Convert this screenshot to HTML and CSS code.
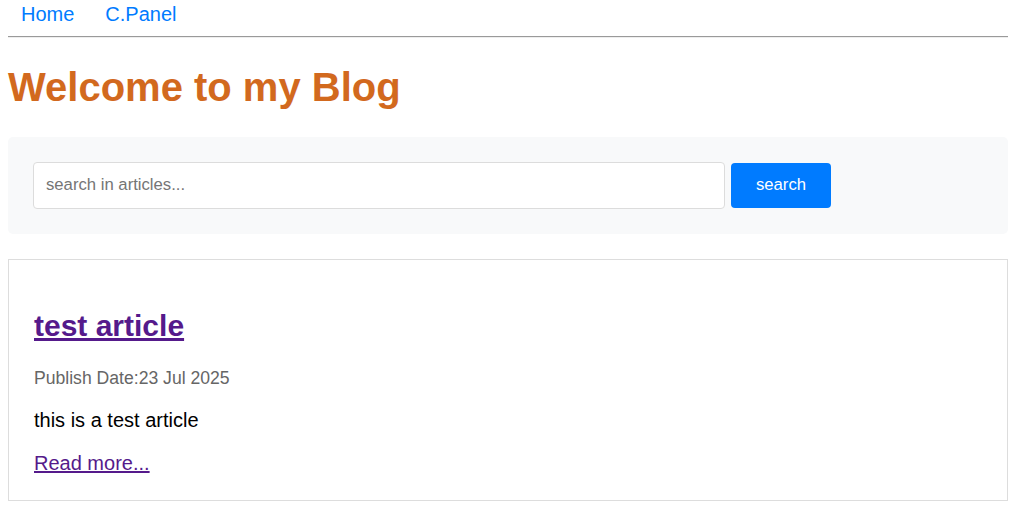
FILE: index.html
```html
<!DOCTYPE html>
<html lang="en">
<head>
<meta charset="utf-8">
<title>My Blog</title>
<link rel="stylesheet" href="styles.css">
</head>
<body>
<div class="page">
  <nav class="nav">
    <a class="nav-link" href="#">Home</a>
    <a class="nav-link" href="#">C.Panel</a>
  </nav>
  <hr class="divider">
  <h1 class="title">Welcome to my Blog</h1>
  <form class="search">
    <input class="search-input" type="text" placeholder="search in articles...">
    <button class="search-btn" type="button">search</button>
  </form>
  <article class="card">
    <h2 class="card-title"><a class="visited" href="#">test article</a></h2>
    <p class="card-date">Publish Date:23 Jul 2025</p>
    <p class="card-text">this is a test article</p>
    <a class="visited read-more" href="#">Read more...</a>
  </article>
</div>
</body>
</html>
```
FILE: styles.css
```css
html, body {
  margin: 0;
  padding: 0;
  background: #fff;
}
body {
  font-family: "Liberation Sans", Arial, sans-serif;
  padding: 0 8px;
}
.page {
  max-width: 1000px;
}
.nav {
  display: flex;
  gap: 31px;
  padding: 3px 0 0 13px;
  line-height: 23px;
}
.nav-link {
  font-size: 20px;
  color: #007bff;
  text-decoration: none;
}
.divider {
  margin: 10px 0 0;
  border: 0;
  border-top: 1px solid #9a9a9a;
  border-bottom: 1px solid #eeeeee;
  height: 0;
}
.title {
  margin: 26px 0 27px;
  font-size: 40px;
  line-height: 46px;
  color: #d2691e;
  font-weight: bold;
}
.search {
  display: flex;
  align-items: center;
  gap: 6px;
  padding: 25px;
  background: #f8f9fa;
  border-radius: 5px;
  margin: 0 0 25px;
}
.search-input {
  width: 692px;
  height: 47px;
  box-sizing: border-box;
  padding: 0 12px 2px;
  border: 1px solid #dcdcdc;
  border-radius: 4px;
  font-family: "Liberation Sans", Arial, sans-serif;
  font-size: 16.7px;
  color: #333;
  background: #fff;
}
.search-input::placeholder {
  color: #757575;
}
.search-btn {
  width: 100px;
  height: 45px;
  padding: 0 0 2px;
  border: 0;
  border-radius: 4px;
  background: #007bff;
  color: #fff;
  font-family: "Liberation Sans", Arial, sans-serif;
  font-size: 16.7px;
}
.card {
  border: 1px solid #dddddd;
  padding: 25px 25px 25px;
}
.visited {
  color: #551a8b;
}
.card-title {
  margin: 23px 0 0;
  font-size: 30px;
  line-height: 35px;
}
.card-date {
  margin: 25px 0 0;
  font-size: 17.6px;
  line-height: 20px;
  color: #666;
}
.card-text {
  margin: 21px 0 0;
  font-size: 20px;
  line-height: 23px;
}
.read-more {
  display: inline-block;
  margin-top: 20px;
  font-size: 20px;
  line-height: 23px;
}
```
